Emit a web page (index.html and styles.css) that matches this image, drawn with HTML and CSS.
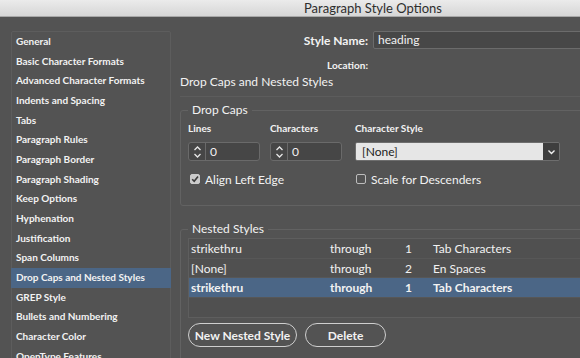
FILE: index.html
```html
<!DOCTYPE html>
<html>
<head>
  <title>Paragraph Style Options</title>
  <link rel="stylesheet" href="styles.css">
</head>
<body>
  <div class="window">
    <div class="titlebar">Paragraph Style Options</div>

    <div class="dialog">
      <!-- Category list -->
      <ul class="sidebar">
        <li>General</li>
        <li>Basic Character Formats</li>
        <li>Advanced Character Formats</li>
        <li>Indents and Spacing</li>
        <li>Tabs</li>
        <li>Paragraph Rules</li>
        <li>Paragraph Border</li>
        <li>Paragraph Shading</li>
        <li>Keep Options</li>
        <li>Hyphenation</li>
        <li>Justification</li>
        <li>Span Columns</li>
        <li class="selected">Drop Caps and Nested Styles</li>
        <li>GREP Style</li>
        <li>Bullets and Numbering</li>
        <li>Character Color</li>
        <li>OpenType Features</li>
      </ul>

      <div class="main">
        <div class="name-row">
          <span class="name-label">Style Name:</span>
          <div class="text-field">heading</div>
        </div>
        <div class="location-row">
          <span class="location-label">Location:</span>
        </div>

        <h2 class="section-title">Drop Caps and Nested Styles</h2>
        <div class="separator"></div>

        <fieldset class="group drop-caps">
          <legend>Drop Caps</legend>
          <div class="caps-grid">
            <span class="field-label">Lines</span>
            <span class="field-label">Characters</span>
            <span class="field-label">Character Style</span>

            <div class="spinner">
              <span class="stepper">
                <svg width="9" height="14" viewBox="0 0 9 14">
                  <path d="M1.5 5 L4.5 2 L7.5 5 M1.5 9 L4.5 12 L7.5 9" fill="none" stroke="#e6e6e6" stroke-width="1.3"/>
                </svg>
              </span>
              <span class="spin-value">0</span>
            </div>
            <div class="spinner">
              <span class="stepper">
                <svg width="9" height="14" viewBox="0 0 9 14">
                  <path d="M1.5 5 L4.5 2 L7.5 5 M1.5 9 L4.5 12 L7.5 9" fill="none" stroke="#e6e6e6" stroke-width="1.3"/>
                </svg>
              </span>
              <span class="spin-value">0</span>
            </div>
            <div class="dropdown">
              <span class="dropdown-value">[None]</span>
              <span class="dropdown-button">
                <svg width="9" height="6" viewBox="0 0 9 6">
                  <path d="M1.5 1.5 L4.5 4.5 L7.5 1.5" fill="none" stroke="#f0f0f0" stroke-width="1.4"/>
                </svg>
              </span>
            </div>

            <label class="check check-first">
              <span class="box checked">
                <svg width="10" height="10" viewBox="0 0 10 10">
                  <path d="M2.2 5.2 L4.2 7.3 L8 2.4" fill="none" stroke="#3a3a3a" stroke-width="1.6"/>
                </svg>
              </span>
              Align Left Edge
            </label>
            <label class="check check-second">
              <span class="box"></span>
              Scale for Descenders
            </label>
          </div>
        </fieldset>

        <fieldset class="group nested">
          <legend>Nested Styles</legend>
          <div class="nested-table">
            <div class="row">
              <span class="col-style">strikethru</span>
              <span class="col-mode">through</span>
              <span class="col-count">1</span>
              <span>Tab Characters</span>
            </div>
            <div class="row">
              <span class="col-style">[None]</span>
              <span class="col-mode">through</span>
              <span class="col-count">2</span>
              <span>En Spaces</span>
            </div>
            <div class="row selected">
              <span class="col-style">strikethru</span>
              <span class="col-mode">through</span>
              <span class="col-count">1</span>
              <span>Tab Characters</span>
            </div>
            <div class="row"></div>
          </div>
          <div class="buttons">
            <button class="pill new-style">New Nested Style</button>
            <button class="pill delete">Delete</button>
          </div>
        </fieldset>
      </div>
    </div>
  </div>
</body>
</html>
```

FILE: styles.css
```css
/* Page */
body {
  margin: 0;
  width: 580px;
  height: 358px;
  overflow: hidden;
  background: #535353;
  font-family: Lato, "Liberation Sans", sans-serif;
  color: #f2f2f2;
}

.window {
  width: 746px;
}

/* Title bar */
.titlebar {
  height: 17px;
  line-height: 17px;
  text-align: center;
  font-size: 13px;
  color: #2e2e2e;
  background: linear-gradient(#ebebeb, #d6d6d6);
  border-bottom: 1px solid #a8a8a8;
  box-sizing: border-box;
}

.dialog {
  display: flex;
  padding-top: 14px;
}

/* Category list */
.sidebar {
  list-style: none;
  margin: 0 0 0 11px;
  padding: 0;
  width: 160px;
  height: 340px;
  box-sizing: border-box;
  border: 1px solid #5d5d5d;
  border-radius: 2px;
}

.sidebar li {
  height: 19.67px;
  line-height: 19.67px;
  padding-left: 4px;
  font-size: 10px;
  font-weight: bold;
  white-space: nowrap;
}

.sidebar li.selected {
  background: #4b6686;
  margin: 0 -1px;
  padding-left: 5px;
}

/* Main panel */
.main {
  margin-left: 9px;
  width: 556px;
}

.name-row {
  display: flex;
  align-items: center;
  gap: 5px;
}

.name-label {
  width: 188px;
  text-align: right;
  font-size: 12px;
  font-weight: bold;
}

.text-field {
  flex: 1;
  height: 18px;
  line-height: 16px;
  box-sizing: border-box;
  padding-left: 4px;
  font-size: 12px;
  background: #474747;
  border: 1px solid #6b6b6b;
  border-radius: 2px;
}

.location-row {
  margin-top: 7px;
  height: 14px;
  line-height: 14px;
}

.location-label {
  display: inline-block;
  width: 188px;
  text-align: right;
  font-size: 10px;
  font-weight: bold;
}

.section-title {
  margin: 4px 0 0;
  height: 16px;
  line-height: 16px;
  font-size: 12px;
  font-weight: normal;
}

.separator {
  margin-top: 6px;
  height: 1px;
  background: #5c5c5c;
}

/* Groups */
.group {
  margin: 6px 0 0;
  padding: 5px 7px 19px;
  border: 1px solid #626262;
  border-radius: 3px;
}

.group legend {
  padding: 0 4px;
  margin-left: 0;
  line-height: 14px;
  font-size: 12px;
}

.caps-grid {
  display: grid;
  grid-template-columns: 82px 85px 205px;
  row-gap: 0;
}

.field-label {
  height: 12px;
  line-height: 12px;
  font-size: 10px;
  font-weight: bold;
  margin-bottom: 8px;
}

.spinner {
  display: flex;
  width: 72px;
  height: 19px;
  box-sizing: border-box;
  background: #464646;
  border: 1px solid #6a6a6a;
  border-radius: 3px;
}

.stepper {
  width: 16px;
  display: flex;
  align-items: center;
  justify-content: center;
  border-right: 1px solid #6a6a6a;
}

.spin-value {
  padding-left: 4px;
  line-height: 17px;
  font-size: 12px;
}

.dropdown {
  display: flex;
  height: 19px;
  box-sizing: border-box;
  border: 1px solid #6e6e6e;
  border-radius: 2px;
  overflow: hidden;
}

.dropdown-value {
  flex: 1;
  background: #e6e6e6;
  color: #222;
  font-size: 12px;
  line-height: 17px;
  padding-left: 6px;
}

.dropdown-button {
  width: 16px;
  background: #3e3e3e;
  display: flex;
  align-items: center;
  justify-content: center;
}

.check {
  display: flex;
  align-items: center;
  gap: 5px;
  margin-top: 11px;
  height: 14px;
  font-size: 12px;
}

.check-first {
  grid-column: 1 / span 2;
  margin-left: 2px;
}

.check-second {
  margin-left: 1px;
}

.box {
  width: 10px;
  height: 10px;
  box-sizing: border-box;
  border: 1px solid #bdbdbd;
  border-radius: 2px;
  display: flex;
}

.box.checked {
  background: #cbcbcb;
  border-color: #cbcbcb;
}

.box svg {
  margin: -1px;
}

/* Nested styles */
.nested {
  margin-top: 16px;
  padding-top: 2px;
}

.nested-table {
  border: 1px solid #5e5e5e;
  background: #505050;
}

.row {
  display: flex;
  height: 19.5px;
  line-height: 19.5px;
  padding-left: 2px;
  font-size: 12px;
  border-bottom: 1px solid #575757;
  box-sizing: border-box;
}

.row:last-child {
  border-bottom: none;
}

.row.selected {
  background: #4b6686;
  font-weight: bold;
}

.col-style {
  width: 139px;
}

.col-mode {
  width: 75px;
}

.col-count {
  width: 28px;
}

.buttons {
  display: flex;
  gap: 8px;
  margin-top: 5px;
}

.pill {
  height: 24px;
  padding: 0;
  background: transparent;
  border: 1px solid #cfcfcf;
  border-radius: 12px;
  color: #f2f2f2;
  font-family: inherit;
  font-size: 12px;
  font-weight: bold;
}

.new-style {
  width: 109px;
}

.delete {
  width: 81px;
}
```
